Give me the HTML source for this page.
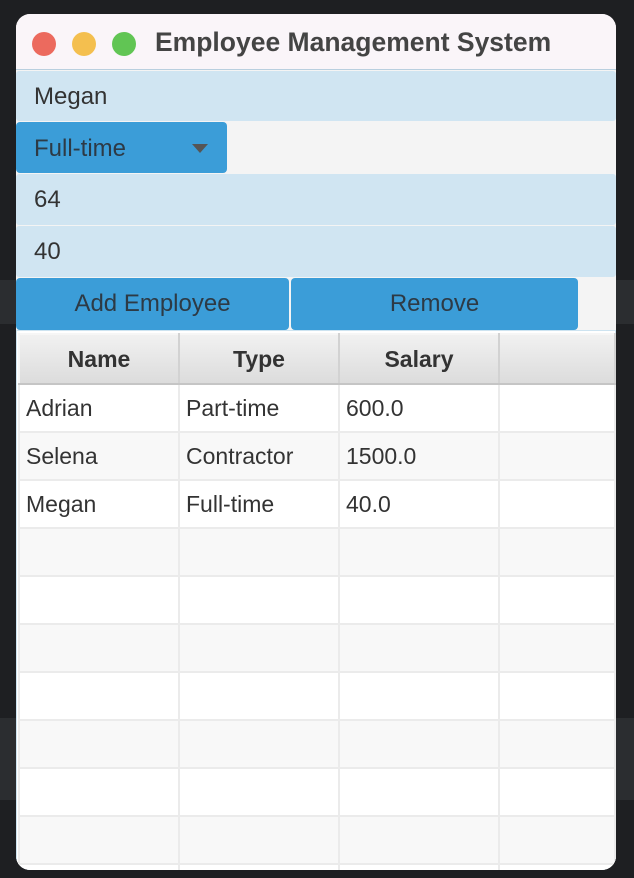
<!DOCTYPE html>
<html><head><style>
*{margin:0;padding:0;box-sizing:border-box}
body{width:634px;height:878px;background:#1e1f22;position:relative;overflow:hidden;font-family:"Liberation Sans",sans-serif;color:#333}
.band{position:absolute;left:0;width:634px;background:#2b2d30}
.win{position:absolute;left:16px;top:14px;width:600px;height:856px;background:#f4f4f4;border-radius:14px;overflow:hidden}
.title{position:absolute;left:0;top:0;width:600px;height:56px;background:#faf5f9;border-bottom:1px solid #b9cfdf}
.dot{position:absolute;top:18px;width:24px;height:24px;border-radius:50%}
.tt{position:absolute;left:139px;top:13px;font-size:26.5px;font-weight:bold;color:#444}
.f{position:absolute;background:#d0e5f2;font-size:24px;padding-left:18px;line-height:52px;border-radius:3px}
.b{position:absolute;background:#3b9dd8;font-size:24px;line-height:52px;text-align:center;border-radius:4px;color:#2d3a45}
table{position:absolute;left:2px;top:319px;border-collapse:collapse;table-layout:fixed;background:#fff}
td,th{border:2px solid #ebebeb;height:48px;font-size:23px;padding-left:6px;text-align:left;font-weight:normal}
th{background:linear-gradient(#f1f1f1,#dcdcdc);font-weight:bold;text-align:center;padding:0;border-color:#f6f6f6 #d2d2d2 #c5c5c5 #f6f6f6;height:50px}
tr:nth-child(odd) td{background:#f8f8f8}
</style></head><body>
<div class="band" style="top:280px;height:44px"></div>
<div class="band" style="top:718px;height:82px"></div>
<div class="win">
<div class="title">
<div class="dot" style="left:16px;background:#ec6a5e"></div>
<div class="dot" style="left:56px;background:#f4bf4f"></div>
<div class="dot" style="left:96px;background:#61c554"></div>
<div class="tt">Employee Management System</div>
</div>
<div class="f" style="left:0;top:57px;width:600px;height:50px">Megan</div>
<div class="b" style="left:0;top:108px;width:211px;height:51px;text-align:left;padding-left:18px;line-height:53px">Full-time<span style="position:absolute;left:176px;top:22px;width:0;height:0;border-left:8px solid transparent;border-right:8px solid transparent;border-top:9px solid #555"></span></div>
<div class="f" style="left:0;top:160px;width:600px;height:51px">64</div>
<div class="f" style="left:0;top:212px;width:600px;height:51px">40</div>
<div class="b" style="left:0;top:264px;width:273px">Add Employee</div>
<div class="b" style="left:275px;top:264px;width:287px">Remove</div>
<div style="position:absolute;left:0;top:316px;width:600px;height:540px;background:#fff;border:1px solid #cde3f0"></div>
<table style="width:596px">
<colgroup><col style="width:160px"><col style="width:160px"><col style="width:160px"><col style="width:116px"></colgroup>
<tr><th>Name</th><th>Type</th><th>Salary</th><th></th></tr>
<tr><td>Adrian</td><td>Part-time</td><td>600.0</td><td></td></tr>
<tr><td>Selena</td><td>Contractor</td><td>1500.0</td><td></td></tr>
<tr><td>Megan</td><td>Full-time</td><td>40.0</td><td></td></tr>
<tr><td></td><td></td><td></td><td></td></tr>
<tr><td></td><td></td><td></td><td></td></tr>
<tr><td></td><td></td><td></td><td></td></tr>
<tr><td></td><td></td><td></td><td></td></tr>
<tr><td></td><td></td><td></td><td></td></tr>
<tr><td></td><td></td><td></td><td></td></tr>
<tr><td></td><td></td><td></td><td></td></tr>
<tr><td></td><td></td><td></td><td></td></tr>
</table>
</div>
</body></html>
